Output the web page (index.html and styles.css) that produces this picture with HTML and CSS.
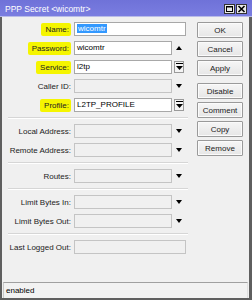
FILE: index.html
```html
<!DOCTYPE html>
<html lang="en">
<head>
  <meta charset="UTF-8" />
  <title>PPP Secret &lt;wicomtr&gt;</title>
  <link rel="stylesheet" href="styles.css">
</head>
<body>
  <div class="window">
    <div class="titlebar">
      <span class="title">PPP Secret &lt;wicomtr&gt;</span>
      <div class="winbtns">
        <span class="winbtn">
          <svg width="9" height="8" viewBox="0 0 9 8"><rect x="1.5" y="1.5" width="6" height="5" fill="none" stroke="#000" stroke-width="1"/><line x1="1" y1="2" x2="8" y2="2" stroke="#000"/></svg>
        </span>
        <span class="winbtn">
          <svg width="9" height="8" viewBox="0 0 9 8"><path d="M1.5 1 L7.5 7 M7.5 1 L1.5 7" stroke="#000" stroke-width="1.6"/></svg>
        </span>
      </div>
    </div>

    <div class="frame">
      <div class="content">
        <div class="form">
          <div class="row">
            <span class="lbl"><span class="hl">Name:</span></span>
            <div class="field wide"><span class="sel">wicomtr</span></div>
          </div>
          <div class="row">
            <span class="lbl"><span class="hl">Password:</span></span>
            <div class="field">wicomtr</div>
            <span class="slot"><span class="tri up"></span></span>
          </div>
          <div class="row">
            <span class="lbl"><span class="hl">Service:</span></span>
            <div class="field">l2tp</div>
            <span class="slot"><span class="dd"><svg width="7" height="8" viewBox="0 0 7 8"><rect x="0" y="0" width="7" height="1" fill="#000"/><path d="M0 3 H7 L3.5 7 Z" fill="#000"/></svg></span></span>
          </div>
          <div class="row">
            <span class="lbl">Caller ID:</span>
            <div class="field off"></div>
            <span class="slot"><span class="tri"></span></span>
          </div>
          <div class="row">
            <span class="lbl"><span class="hl">Profile:</span></span>
            <div class="field">L2TP_PROFILE</div>
            <span class="slot"><span class="dd"><svg width="7" height="8" viewBox="0 0 7 8"><rect x="0" y="0" width="7" height="1" fill="#000"/><path d="M0 3 H7 L3.5 7 Z" fill="#000"/></svg></span></span>
          </div>

          <div class="sep"></div>

          <div class="row">
            <span class="lbl">Local Address:</span>
            <div class="field off"></div>
            <span class="slot"><span class="tri"></span></span>
          </div>
          <div class="row">
            <span class="lbl">Remote Address:</span>
            <div class="field off"></div>
            <span class="slot"><span class="tri"></span></span>
          </div>

          <div class="sep"></div>

          <div class="row">
            <span class="lbl">Routes:</span>
            <div class="field off"></div>
            <span class="slot"><span class="tri"></span></span>
          </div>

          <div class="sep"></div>

          <div class="row">
            <span class="lbl">Limit Bytes In:</span>
            <div class="field off"></div>
            <span class="slot"><span class="tri"></span></span>
          </div>
          <div class="row">
            <span class="lbl">Limit Bytes Out:</span>
            <div class="field off"></div>
            <span class="slot"><span class="tri"></span></span>
          </div>

          <div class="sep"></div>

          <div class="row">
            <span class="lbl">Last Logged Out:</span>
            <div class="field off wide"></div>
          </div>
        </div>

        <div class="buttons">
          <button>OK</button>
          <button>Cancel</button>
          <button>Apply</button>
          <button class="gap">Disable</button>
          <button>Comment</button>
          <button>Copy</button>
          <button>Remove</button>
        </div>
      </div>

      <div class="status">enabled</div>
    </div>
  </div>
</body>
</html>
```

FILE: styles.css
```css
body {
  margin: 0;
  padding: 0;
  background: #f0f0f0;
  font-family: 'Liberation Sans', Arial, sans-serif;
  font-size: 8px;
  color: #000;
}
.window {
  width: 252px;
  height: 300px;
  display: flex;
  flex-direction: column;
  background: #5f5f5f;
}
.titlebar {
  height: 16px;
  flex: none;
  display: flex;
  align-items: center;
  justify-content: space-between;
  background: linear-gradient(#6f72d8, #7a7de0);
  border-bottom: 1px solid #b9bbe8;
}
.title {
  color: #fff;
  font-size: 8.5px;
  margin-left: 5px;
  margin-top: 1px;
}
.winbtns {
  display: flex;
  gap: 1px;
  margin-right: 5px;
  margin-top: 1px;
}
.winbtn {
  width: 9px;
  height: 8px;
  border: 1px solid #333;
  background: #eaeaea;
  display: flex;
}
.frame {
  flex: 1;
  display: flex;
  flex-direction: column;
  background: #f0f0f0;
  margin: 0 3px 2px 2px;
}
.content {
  flex: 1;
  display: flex;
  padding-top: 5px;
}
.form {
  width: 186px;
}
.row {
  display: flex;
  align-items: center;
  height: 14px;
  margin-bottom: 5px;
}
.lbl {
  width: 69px;
  text-align: right;
  margin-right: 3px;
  color: #222;
  white-space: nowrap;
}
.hl {
  background: #f5f500;
  padding: 2px 2px 2px 4px;
  border-radius: 2px;
}
.field {
  width: 98px;
  height: 14px;
  box-sizing: border-box;
  background: #fff;
  border: 1px solid #a8a8a8;
  padding: 1px 2px;
  line-height: 10px;
  white-space: nowrap;
  overflow: hidden;
}
.field.wide {
  width: 112px;
}
.field.off {
  background: #f0f0f0;
  border-color: #c4c4c4;
}
.sel {
  background: #3399ff;
  color: #fff;
  padding: 0 1px;
}
.slot {
  width: 14px;
  height: 14px;
  display: flex;
  align-items: center;
  justify-content: center;
}
.tri {
  width: 0;
  height: 0;
  border-left: 3.5px solid transparent;
  border-right: 3.5px solid transparent;
  border-top: 4px solid #000;
}
.tri.up {
  border-top: none;
  border-bottom: 4px solid #000;
}
.dd {
  width: 10px;
  height: 12px;
  box-sizing: border-box;
  border: 1px solid #9a9a9a;
  background: #f4f4f4;
  display: flex;
  align-items: center;
  justify-content: center;
}
.sep {
  height: 1px;
  border-top: 1px solid #d6d6d6;
  background: #fff;
  margin: 1px 0 5px 6px;
}
.buttons {
  display: flex;
  flex-direction: column;
  gap: 3px;
  margin-left: 9px;
  margin-top: 0;
}
button {
  width: 46px;
  height: 16px;
  padding: 0;
  font-family: 'Liberation Sans', Arial, sans-serif;
  font-size: 8px;
  color: #222;
  background: linear-gradient(#f6f6f6, #e6e6e6);
  border: 1px solid #9a9a9a;
  border-radius: 1px;
  box-shadow: inset 0 0 0 1px #fbfbfb;
}
button.gap {
  margin-top: 4px;
}
.status {
  height: 16px;
  box-sizing: border-box;
  margin: 0 1px 0 1px;
  border-top: 1px solid #a0a0a0;
  border-left: 1px solid #c8c8c8;
  border-right: 1px solid #e0e0e0;
  padding: 3px 2px;
  line-height: 10px;
  background: #f2f2f2;
}
```
